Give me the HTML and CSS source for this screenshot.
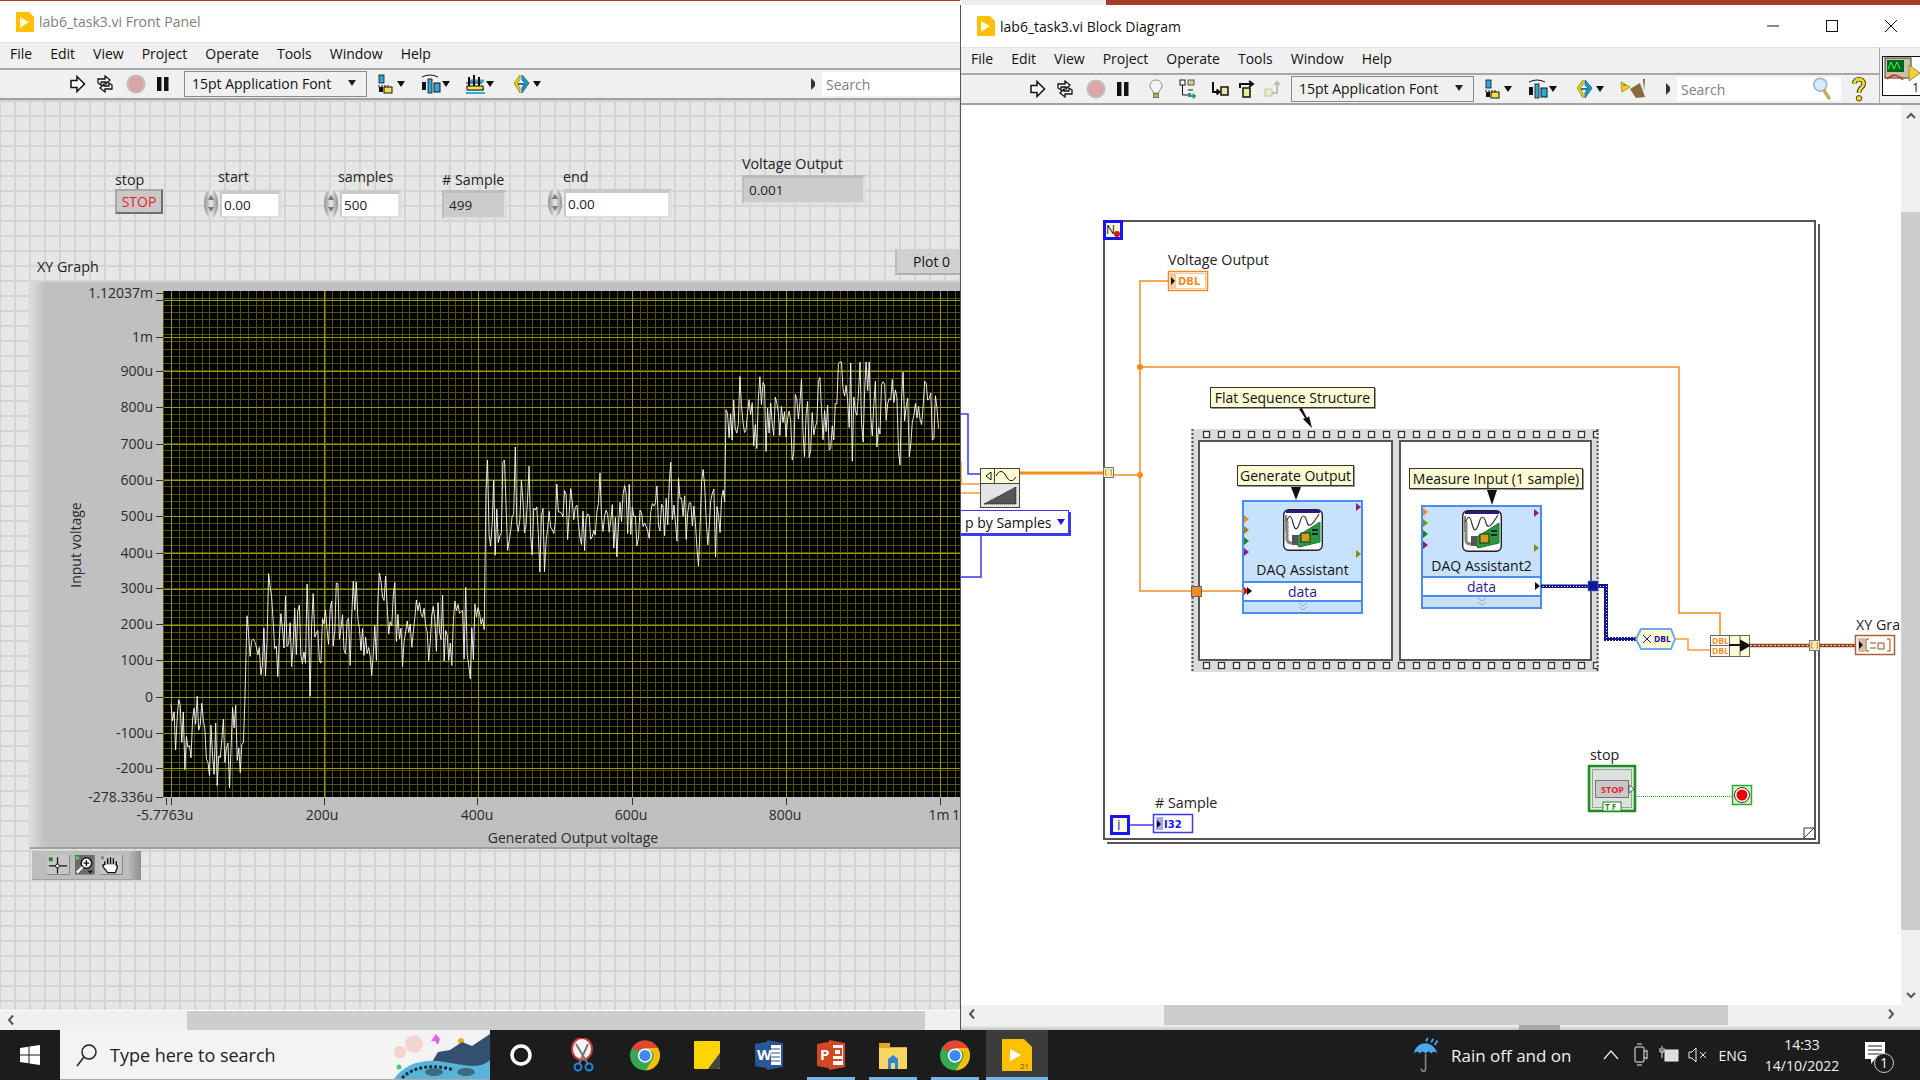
FILE: index.html
```html
<!DOCTYPE html>
<html lang="en">
<head>
  <meta charset="UTF-8">
  <title>lab6_task3.vi</title>
  <link rel="stylesheet" href="styles.css">
</head>
<body>

<svg class="defs" width="0" height="0">
  <defs>
    <symbol id="i-vi" viewBox="0 0 20 20"><path d="M2 0H15L20 5V20H2Z" fill="#ffc000"/><path d="M6 5L15 10L6 16Z" fill="#fff8d8"/></symbol>
    <symbol id="i-run" viewBox="0 0 20 20"><path d="M4 6.5H10V2.5L17.5 10L10 17.5V13.500H4Z" fill="#fff" stroke="#111" stroke-width="1.500"/></symbol>
    <symbol id="i-runc" viewBox="0 0 20 20"><path d="M3 9V5H10V2L15 6L11 10V8H6V11ZM17 11V15H10V18L5 14L9 10V12H14V9Z" fill="#fff" stroke="#111" stroke-width="1.300"/></symbol>
    <symbol id="i-abort" viewBox="0 0 20 20"><circle cx="10" cy="10" r="8.500" fill="#dda6a6" stroke="#bdbdbd" stroke-width="2"/></symbol>
    <symbol id="i-pause" viewBox="0 0 20 20"><rect x="4" y="3" width="4.500" height="14" fill="#111"/><rect x="11" y="3" width="4.500" height="14" fill="#111"/></symbol>
    <symbol id="i-bulb" viewBox="0 0 20 20"><path d="M10 1C6 1 4 4 4 7C4 10 7 11 7.500 14H12.500C13 11 16 10 16 7C16 4 14 1 10 1Z" fill="#f4f4f4" stroke="#8a8a8a"/><rect x="7.500" y="14.500" width="5" height="4" fill="#c8a848" stroke="#777"/></symbol>
    <symbol id="i-probe" viewBox="0 0 20 20"><rect x="3" y="1" width="5" height="5" fill="#fff" stroke="#111"/><rect x="11" y="1" width="6" height="5" fill="#cfcf9f" stroke="#555"/><path d="M5.500 6V16H14M11 11H16" fill="none" stroke="#111"/><path d="M14 17H19M16.500 14.500V19.500" stroke="#22aa22" stroke-width="2"/><rect x="11" y="14" width="3" height="4" fill="#3388cc"/></symbol>
    <symbol id="i-into" viewBox="0 0 20 20"><path d="M3 3V13H9M6.500 10.500L9.500 13L6.500 15.500" fill="none" stroke="#111" stroke-width="2"/><rect x="11" y="8" width="7" height="8" fill="#f0e8a0" stroke="#111" stroke-width="1.500"/></symbol>
    <symbol id="i-over" viewBox="0 0 20 20"><path d="M2 9V5H14M11 2L15 5L11 8" fill="none" stroke="#111" stroke-width="2"/><rect x="5" y="9" width="7" height="9" fill="#f0e8a0" stroke="#111" stroke-width="1.500"/></symbol>
    <symbol id="i-out" viewBox="0 0 20 20"><rect x="2" y="10" width="7" height="7" fill="#f0ecc8" stroke="#c4c0a0"/><path d="M9 14H14V4M11 6L14 3L17 6" fill="none" stroke="#bdbdbd" stroke-width="2"/></symbol>
    <symbol id="i-align" viewBox="0 0 30 20"><rect x="2" y="1" width="5" height="8" fill="#2fa9d8" stroke="#111" stroke-width=".8"/><path d="M1 12H12" stroke="#111" stroke-dasharray="2 1"/><rect x="2" y="13" width="4" height="5" fill="#111"/><rect x="7" y="13" width="8" height="6" fill="#f2e04a" stroke="#111"/><path d="M20 7H28L24 13Z" fill="#111"/></symbol>
    <symbol id="i-dist" viewBox="0 0 30 20"><path d="M1 3Q9 -1 17 3" fill="none" stroke="#111"/><rect x="1" y="8" width="4" height="8" fill="#111"/><rect x="7" y="5" width="4" height="14" fill="#2fa9d8" stroke="#111" stroke-width=".8"/><rect x="13" y="9" width="6" height="9" fill="#2fa9d8" stroke="#111"/><path d="M21 7H29L25 13Z" fill="#111"/></symbol>
    <symbol id="i-size" viewBox="0 0 30 20"><path d="M3 7H19M3 15H19" stroke="#2fa9d8" stroke-width="3"/><path d="M4 3V12M9 1V12M14 3V12" stroke="#111" stroke-width="2"/><path d="M1 9H17" stroke="#111"/><rect x="2" y="12" width="16" height="4" fill="#f2e04a" stroke="#111"/><path d="M1 19H20" stroke="#2fa9d8" stroke-width="2"/><path d="M21 7H29L25 13Z" fill="#111"/></symbol>
    <symbol id="i-order" viewBox="0 0 30 20"><path d="M8 1L2 9L8 19V14L5 9L8 6Z" fill="#e6d21e" stroke="#a89c10"/><path d="M10 1L17 9L10 19V14L13 9L10 6Z" fill="#1f98c8" stroke="#176f90"/><path d="M6 10H13" stroke="#2277aa" stroke-width="2"/><path d="M21 7H29L25 13Z" fill="#111"/></symbol>
    <symbol id="i-clean" viewBox="0 0 30 20"><path d="M1 3L10 8L2 13Z" fill="#f2d21e" stroke="#a89c10"/><path d="M3 6H6" stroke="#cc2222"/><path d="M23 0L25 0L24 12Z" fill="#7a5a2a"/><path d="M10 10L20 4L25 18L16 19Z" fill="#8a6a3a"/></symbol>
    <symbol id="i-lens" viewBox="0 0 22 28"><circle cx="9" cy="9" r="7.500" fill="#d8ecfa" stroke="#9cb7cf" stroke-width="2"/><path d="M13 15L20 26" stroke="#c9a46a" stroke-width="4"/></symbol>
    <symbol id="i-help" viewBox="0 0 18 28"><path d="M4 8C4 2 14 2 14 8C14 13 9 12 9 18" fill="none" stroke="#333" stroke-width="5"/><path d="M4 8C4 2 14 2 14 8C14 13 9 12 9 18" fill="none" stroke="#f4de18" stroke-width="3"/><circle cx="9" cy="24" r="3" fill="#f4de18" stroke="#333"/></symbol>
    <symbol id="i-daq" viewBox="0 0 40 42"><rect x=".7" y=".7" width="38.600" height="40.600" rx="5" fill="#fff" stroke="#222" stroke-width="1.400"/><path d="M3 1H37V4H3Z" fill="#2b1a7a"/><path d="M3 6V22M3 14C6 5 8 5 10 14C12 22 14 22 17 13C19 5 22 5 24 13C26 20 30 15 36 5" fill="none" stroke="#333" stroke-width="1.200"/><path d="M4 12V30Q4 34 9 34" fill="none" stroke="#888" stroke-width="3"/><path d="M10 30L37 13V33L16 38Z" fill="#2d9a3a" stroke="#174"/><rect x="18" y="24" width="9" height="9" fill="#c8a020" stroke="#222"/><rect x="9" y="26" width="6" height="10" fill="#555"/><path d="M29 21H35M29 25H35" stroke="#123" stroke-width="2"/></symbol>
    <symbol id="i-more" viewBox="0 0 12 10"><path d="M2 1L6 4L10 1M2 5L6 8L10 5" fill="none" stroke="#9aa8c0"/></symbol>
    <symbol id="i-left" viewBox="0 0 10 12"><path d="M7 1.500L3 6L7 10.500" fill="none" stroke="#555" stroke-width="2"/></symbol>
    <symbol id="i-right" viewBox="0 0 10 12"><path d="M3 1.500L7 6L3 10.500" fill="none" stroke="#555" stroke-width="2"/></symbol>
    <symbol id="i-chrome" viewBox="0 0 40 40"><circle cx="20" cy="20" r="20" fill="#34a853"/><path d="M20 0A20 20 0 0 1 37.300 10H20A10 10 0 0 0 11 15L3 10A20 20 0 0 1 20 0Z" fill="#ea4335"/><path d="M37.300 10A20 20 0 0 1 21 40L30 25A10 10 0 0 0 30 15L20 10Z" fill="#fbbc05"/><path d="M3 10L11 25" stroke="#34a853"/><circle cx="20" cy="20" r="9.500" fill="#fff"/><circle cx="20" cy="20" r="7.500" fill="#4285f4"/></symbol>
    <pattern id="film" patternUnits="userSpaceOnUse" x="1202" y="429" width="15" height="11"><rect x="1.500" y="2.500" width="6" height="6" fill="#fff" stroke="#333" stroke-width="1.300"/></pattern>
    <pattern id="blue-wire" patternUnits="userSpaceOnUse" width="3" height="3"><rect width="3" height="3" fill="#14148c"/><rect x="1" y="1" width="1" height="1" fill="#fff"/></pattern>
  </defs>
</svg>

<div class="strip-left"></div>

<!-- front panel -->
<section class="win front">
  <header class="titlebar">
    <svg class="vi-icon"><use href="#i-vi"/></svg>
    <span class="title-front">lab6_task3.vi Front Panel</span>
  </header>
  <nav class="menubar">
    <span>File</span><span>Edit</span><span>View</span><span>Project</span><span>Operate</span><span>Tools</span><span>Window</span><span>Help</span>
  </nav>
  <div class="toolbar">
    <svg class="ico ml-67"><use href="#i-run"/></svg>
    <svg class="ico ml-8"><use href="#i-runc"/></svg>
    <svg class="ico ml-11"><use href="#i-abort"/></svg>
    <svg class="ico ml-7"><use href="#i-pause"/></svg>
    <div class="font-ring ml-11"><span>15pt Application Font</span><i></i></div>
    <svg class="ico-w ml-10"><use href="#i-align"/></svg>
    <svg class="ico-w ml-14"><use href="#i-dist"/></svg>
    <svg class="ico-w ml-14"><use href="#i-size"/></svg>
    <svg class="ico-w ml-17"><use href="#i-order"/></svg>
    <i class="search-arrow ml-269"></i>
    <div class="searchbox searchbox-front">Search</div>
  </div>
  <div class="panel">
    <span class="lbl l-stop">stop</span>
    <div class="stop-btn">STOP</div>

    <span class="lbl l-start">start</span>
    <div class="spin s-start"></div>
    <div class="num n-start">0.00</div>

    <span class="lbl l-samples">samples</span>
    <div class="spin s-samples"></div>
    <div class="num n-samples">500</div>

    <span class="lbl l-nsample"># Sample</span>
    <div class="ind i-nsample">499</div>

    <span class="lbl l-end">end</span>
    <div class="spin s-end"></div>
    <div class="num n-end">0.00</div>

    <span class="lbl l-volt">Voltage Output</span>
    <div class="ind i-volt">0.001</div>

    <span class="lbl l-xy">XY Graph</span>
    <div class="legend">Plot 0</div>

    <div class="graph-frame">
      <svg class="graph" viewBox="30 281 931 568" width="931" height="568">
        <rect x="164" y="291" width="797" height="506" fill="#000"/>
        <g id="grid" shape-rendering="crispEdges"></g>
        <polyline id="trace" fill="none" stroke="#fff" stroke-width=".9"/>
        <path d="M156 293H163M156 300H163M156 337H163M156 371.500H163M156 407.500H163M156 444H163M156 480H163M156 516.500H163M156 553H163M156 588.500H163M156 624.500H163M156 660.500H163M156 697H163M156 733H163M156 768H163M156 797H163M166 798V805M171 798V805M324 798V805M477 798V805M632 798V805M786 798V805M940 798V805" stroke="#333" shape-rendering="crispEdges"/>
        <g class="y-labels">
          <text x="153" y="298">1.12037m</text>
          <text x="153" y="342">1m</text>
          <text x="153" y="376">900u</text>
          <text x="153" y="412">800u</text>
          <text x="153" y="449">700u</text>
          <text x="153" y="485">600u</text>
          <text x="153" y="521">500u</text>
          <text x="153" y="558">400u</text>
          <text x="153" y="593">300u</text>
          <text x="153" y="629">200u</text>
          <text x="153" y="665">100u</text>
          <text x="153" y="702">0</text>
          <text x="153" y="738">-100u</text>
          <text x="153" y="773">-200u</text>
          <text x="153" y="802">-278.336u</text>
        </g>
        <g class="x-labels">
          <text x="165" y="820">-5.7763u</text>
          <text x="322" y="820">200u</text>
          <text x="477" y="820">400u</text>
          <text x="631" y="820">600u</text>
          <text x="785" y="820">800u</text>
          <text x="939" y="820">1m</text>
          <text x="956" y="820">1</text>
          <text x="573" y="843">Generated Output voltage</text>
        </g>
        <text class="y-title" transform="translate(81 545) rotate(-90)">Input voltage</text>
      </svg>
    </div>

    <div class="palette">
      <div class="pal-btn">
        <svg width="23" height="20" viewBox="0 0 23 20"><path d="M2 11H21M11 2V19" stroke="#111" stroke-width="1.300"/><circle cx="11" cy="11" r="2" fill="#fff" stroke="#111"/><rect x="2" y="2" width="4" height="4" fill="#2f7a2f"/></svg>
      </div>
      <div class="pal-btn pal-on">
        <svg width="20" height="20" viewBox="0 0 20 20"><circle cx="12" cy="8" r="5.500" fill="#fff" stroke="#111" stroke-width="1.500"/><path d="M9 8H15M12 5V11" stroke="#111" stroke-width="1.500"/><path d="M8 12L2 18" stroke="#fff" stroke-width="2.500"/><path d="M13 16H19L16 19Z" fill="#111"/><rect x="1" y="1" width="3" height="3" fill="#44ee44"/></svg>
      </div>
      <div class="pal-btn">
        <svg width="23" height="20" viewBox="0 0 23 20"><path d="M5 10V6M8 9V3M11 9V2M14 9V3M17 11V6M5 10C3 9 2 11 4 13L8 18H16L18 13V10" fill="#fff" stroke="#111" stroke-width="1.400"/><rect x="1" y="1" width="3" height="3" fill="#6a8a6a"/></svg>
      </div>
    </div>
  </div>
  <div class="hscroll">
    <svg class="arrow-l"><use href="#i-left"/></svg>
    <div class="thumb thumb-front"></div>
  </div>
</section>

<!-- block diagram -->
<section class="win block">
  <header class="titlebar titlebar-block">
    <svg class="vi-icon"><use href="#i-vi"/></svg>
    <span class="title-block">lab6_task3.vi Block Diagram</span>
    <div class="win-btns">
      <svg width="14" height="14" viewBox="0 0 14 14"><path d="M1 7H13" stroke="#111"/></svg>
      <svg width="14" height="14" viewBox="0 0 14 14"><rect x="1.500" y="1.500" width="11" height="11" fill="none" stroke="#111"/></svg>
      <svg width="14" height="14" viewBox="0 0 14 14"><path d="M1 1L13 13M13 1L1 13" stroke="#111"/></svg>
    </div>
  </header>
  <div class="bars">
    <div class="bars-main">
      <nav class="menubar">
        <span>File</span><span>Edit</span><span>View</span><span>Project</span><span>Operate</span><span>Tools</span><span>Window</span><span>Help</span>
      </nav>
      <div class="toolbar">
        <svg class="ico ml-66"><use href="#i-run"/></svg>
        <svg class="ico ml-8"><use href="#i-runc"/></svg>
        <svg class="ico ml-11"><use href="#i-abort"/></svg>
        <svg class="ico ml-7"><use href="#i-pause"/></svg>
        <svg class="ico ml-13"><use href="#i-bulb"/></svg>
        <svg class="ico ml-11"><use href="#i-probe"/></svg>
        <svg class="ico ml-13"><use href="#i-into"/></svg>
        <svg class="ico ml-8"><use href="#i-over"/></svg>
        <svg class="ico ml-5"><use href="#i-out"/></svg>
        <div class="font-ring ml-8"><span>15pt Application Font</span><i></i></div>
        <svg class="ico-w ml-10"><use href="#i-align"/></svg>
        <svg class="ico-w ml-14"><use href="#i-dist"/></svg>
        <svg class="ico-w ml-17"><use href="#i-order"/></svg>
        <svg class="ico-w ml-15"><use href="#i-clean"/></svg>
        <i class="search-arrow ml-16"></i>
        <div class="searchbox searchbox-block">Search<svg class="lens"><use href="#i-lens"/></svg></div>
        <svg class="help"><use href="#i-help"/></svg>
      </div>
    </div>
    <div class="vi-pane">
      <div class="vi-thumb">
        <svg width="38" height="26" viewBox="0 0 38 26"><rect x="2" y="1" width="26" height="20" fill="#c8c4a0" stroke="#333"/><rect x="4" y="3" width="17" height="12" fill="#062"/><path d="M5 12L8 5L11 12L14 5L17 12" fill="none" stroke="#3f3"/><path d="M4 22Q12 14 20 23" fill="none" stroke="#d22" stroke-width="1.500"/><path d="M26 8L37 16L26 24Z" fill="#f2d21e" stroke="#888"/></svg>
        <b>1</b>
      </div>
    </div>
  </div>

  <div class="bd-body">
    <div class="canvas">
      <div class="loop"></div>
      <div class="loop-n"><b>N</b><i></i></div>

      <span class="lbl d-volt">Voltage Output</span>
      <span class="lbl d-xy">XY Gra</span>
      <span class="lbl d-stop">stop</span>
      <span class="lbl d-sample"># Sample</span>

      <div class="ramp-ring">p by Samples<i></i></div>

      <div class="seq">
        <div class="frame frame-1"></div>
        <div class="frame frame-2"></div>
      </div>

      <div class="note note-flat">Flat Sequence Structure</div>
      <div class="note note-gen">Generate Output</div>
      <div class="note note-meas">Measure Input (1 sample)</div>

      <div class="daq daq-1">
        <div class="daq-top"><svg class="daq-ic"><use href="#i-daq"/></svg><span>DAQ Assistant</span></div>
        <div class="daq-row">data</div>
        <div class="daq-more"><svg><use href="#i-more"/></svg></div>
      </div>
      <div class="daq daq-2">
        <div class="daq-top"><svg class="daq-ic"><use href="#i-daq"/></svg><span>DAQ Assistant2</span></div>
        <div class="daq-row">data</div>
        <div class="daq-more"><svg><use href="#i-more"/></svg></div>
      </div>

      <svg class="wires" viewBox="961 105 940 900" width="940" height="900">
        <!-- film strip holes -->
        <rect x="1202" y="429" width="396" height="11" fill="url(#film)"/>
        <rect x="1202" y="661" width="396" height="11" fill="url(#film)"/>
        <path d="M1192.500 429V672M1597.500 429V672" stroke="#555" stroke-width="2" stroke-dasharray="2 2"/>

        <!-- blue ramp inputs -->
        <path d="M961 414H968V474H980M961 577H981V535" fill="none" stroke="#3a3af0" stroke-width="1.500"/>
        <path d="M961 461V484H980M961 493H980" fill="none" stroke="#ff9a3c" stroke-width="1.500"/>

        <!-- orange wires -->
        <path d="M1020 473H1103" stroke="#f58a1f" stroke-width="3"/>
        <path d="M1113 475H1140M1168 281H1140V591H1191M1140 367H1679V613H1720V635M1202 591H1245" fill="none" stroke="#f58a1f" stroke-width="1.500"/>
        <circle cx="1140" cy="475" r="3" fill="#f58a1f"/>
        <circle cx="1140" cy="367" r="3" fill="#f58a1f"/>
        <path d="M1676 639H1688V650H1710" fill="none" stroke="#ff9a3c" stroke-width="1.500"/>

        <!-- ramp node -->
        <rect x="980.500" y="468.500" width="39" height="39" fill="#e4e4e4" stroke="#444"/>
        <rect x="981" y="469" width="38" height="14" fill="#fdfbd4"/>
        <path d="M980.500 483.500H1019.500M994.500 469V483" stroke="#444"/>
        <path d="M986 476L991 472V480ZM996 476C999 470 1003 470 1006 476C1009 482 1013 482 1016 477" fill="none" stroke="#111"/>
        <path d="M984 504L1016 487V504Z" fill="#555"/>
        <path d="M984 504L1016 487V504Z" fill="none" stroke="#111" stroke-dasharray="1 1"/>

        <!-- arrows from notes -->
        <path d="M1299 409L1305 418L1303 419L1312 428L1309 416L1307 418L1302 408Z" fill="#111"/>
        <path d="M1291 487H1301L1296 500Z" fill="#111"/>
        <path d="M1487 490H1497L1492 505Z" fill="#111"/>

        <!-- tunnels -->
        <rect x="1103.500" y="467.500" width="10" height="10" fill="#efe9c0" stroke="#777"/>
        <path d="M1107 470H1105.500V475H1107M1110 470H1111.500V475H1110" fill="none" stroke="#f58a1f"/>
        <rect x="1191.500" y="586.500" width="10" height="10" fill="#f58a1f" stroke="#666"/>

        <!-- DAQ terminals -->
        <g>
          <path d="M1244 515L1249 519L1244 523Z" fill="#f58a1f"/>
          <path d="M1244 526L1249 530L1244 534Z" fill="#8a8a1a"/>
          <path d="M1244 537L1249 541L1244 545Z" fill="#1a8a1a"/>
          <path d="M1244 548L1249 552L1244 556Z" fill="#8a1a8a"/>
          <path d="M1356 503L1361 507L1356 511Z" fill="#8a1a8a"/>
          <path d="M1356 550L1361 554L1356 558Z" fill="#8a8a1a"/>
          <path d="M1244 587L1249 591L1244 595Z" fill="#e00"/>
          <path d="M1247 587L1252 591L1247 595Z" fill="#111"/>
          <path d="M1423 508L1428 512L1423 516Z" fill="#f58a1f"/>
          <path d="M1423 519L1428 523L1423 527Z" fill="#8a8a1a"/>
          <path d="M1423 530L1428 534L1423 538Z" fill="#1a8a1a"/>
          <path d="M1423 541L1428 545L1423 549Z" fill="#8a1a8a"/>
          <path d="M1534 509L1539 513L1534 517Z" fill="#8a1a8a"/>
          <path d="M1534 544L1539 548L1534 552Z" fill="#8a8a1a"/>
          <path d="M1535 582L1540 586L1535 590Z" fill="#111"/>
        </g>

        <!-- blue data wire -->
        <path d="M1541 584.500H1588V588H1541ZM1598 584H1608V637H1637V641H1604V588H1598Z" fill="url(#blue-wire)"/>
        <rect x="1588" y="581" width="10" height="10" fill="#14148c" stroke="#4488ff" stroke-width=".6"/>

        <!-- convert from dynamic data -->
        <path d="M1636 639L1641 629H1671L1675 639L1671 649H1641Z" fill="#fdfbd4" stroke="#6fa8f5" stroke-width="2"/>
        <path d="M1643 635L1651 643M1651 635L1643 643" stroke="#14148c"/>
        <text class="t-small t-navy" x="1654" y="642">DBL</text>

        <!-- bundle -->
        <rect x="1710.500" y="635.500" width="39" height="21" fill="#fdfbd4" stroke="#666"/>
        <path d="M1710.500 645.500H1729.500M1729.500 635V656M1740 635V656" stroke="#666"/>
        <rect x="1711" y="636" width="18" height="9" fill="#fff"/>
        <rect x="1711" y="646" width="18" height="10" fill="#fff"/>
        <text class="t-small t-orange" x="1712" y="644">DBL</text>
        <text class="t-small t-orange" x="1712" y="654">DBL</text>
        <path d="M1729 645H1746M1741 641L1749 645.500L1741 650Z" stroke="#111" stroke-width="2" fill="#111"/>

        <!-- cluster wire -->
        <path d="M1750 645.500H1855" stroke="#8f4a22" stroke-width="3.500"/>
        <path d="M1750 645.500H1855" stroke="#e9c7a8" stroke-dasharray="2 2"/>
        <rect x="1809.500" y="640.500" width="10" height="10" fill="#efe9c0" stroke="#777"/>
        <path d="M1813 643H1811.500V648H1813M1816 643H1817.500V648H1816" fill="none" stroke="#f58a1f"/>

        <!-- terminals -->
        <rect x="1168.500" y="271.500" width="39" height="19" fill="#fff" stroke="#f58a1f" stroke-width="1.500"/>
        <rect x="1170.500" y="273.500" width="35" height="15" fill="none" stroke="#f5c9a0"/>
        <rect x="1171" y="274" width="5" height="14" fill="#f5c9a0"/>
        <path d="M1171 277L1175 281L1171 285Z" fill="#111"/>
        <text class="t-term t-orange" x="1178" y="285">DBL</text>

        <rect x="1855.500" y="635.500" width="39" height="19" fill="#fff" stroke="#a8603c" stroke-width="1.500"/>
        <rect x="1858" y="638" width="7" height="14" fill="#dcb9a8"/>
        <path d="M1859 641L1863 645L1859 649Z" fill="#111"/>
        <path d="M1869 639H1866V651H1869M1887 639H1890V651H1887M1870 643H1876M1870 648H1876M1878 643H1884V649H1878Z" fill="none" stroke="#8f4a22"/>

        <rect x="1153.500" y="814.500" width="39" height="18" fill="#fff" stroke="#3a3af0" stroke-width="1.500"/>
        <rect x="1156" y="817" width="7" height="13" fill="#a8a8f0"/>
        <path d="M1157 820L1161 824L1157 828Z" fill="#111"/>
        <text class="t-term t-blue" x="1164" y="828">I32</text>
        <path d="M1130 825H1153" stroke="#3a3af0" stroke-width="1.500"/>
        <rect x="1111.500" y="816.500" width="17" height="17" fill="#fdfbd4" stroke="#1515f5" stroke-width="3"/>
        <text class="t-i" x="1117" y="830">i</text>

        <!-- stop button terminal -->
        <rect x="1589" y="766" width="46" height="45" fill="#e0e0e0" stroke="#1f8a1f" stroke-width="2.500"/>
        <rect x="1592.500" y="769.500" width="39" height="38" fill="#e0e0e0" stroke="#7ab87a"/>
        <rect x="1595.500" y="780.500" width="33" height="17" fill="#c8c8c8" stroke="#777"/>
        <text class="t-stop" x="1601" y="793">STOP</text>
        <path d="M1629 785L1634 789L1629 793Z" fill="#fff" stroke="#555"/>
        <rect x="1603" y="802" width="18" height="9" fill="#fff" stroke="#1f8a1f"/>
        <text class="t-tf" x="1605" y="810">T F</text>
        <path d="M1637 796.500H1732" stroke="#2faa2f" stroke-dasharray="1 1"/>
        <rect x="1732.500" y="785.500" width="19" height="19" fill="#dff0c8" stroke="#2faa2f" stroke-width="1.500"/>
        <circle cx="1742" cy="795" r="7.500" fill="#fff" stroke="#333"/>
        <circle cx="1742" cy="795" r="5.500" fill="#f00000"/>

        <!-- conditional dog ear -->
        <path d="M1804 828H1814L1804 838Z" fill="#fff" stroke="#333"/>
      </svg>
    </div>
    <div class="vscroll">
      <svg class="arrow-up" width="12" height="10" viewBox="0 0 12 10"><path d="M2 7L6 3L10 7" fill="none" stroke="#555" stroke-width="2"/></svg>
      <div class="thumb-v"></div>
      <svg class="arrow-down" width="12" height="10" viewBox="0 0 12 10"><path d="M2 3L6 7L10 3" fill="none" stroke="#555" stroke-width="2"/></svg>
    </div>
  </div>
  <div class="hscroll hscroll-block">
    <svg class="arrow-l"><use href="#i-left"/></svg>
    <div class="thumb thumb-block"></div>
    <svg class="arrow-r"><use href="#i-right"/></svg>
  </div>
  <div class="under"><div class="under-thumb"></div></div>
</section>

<!-- taskbar -->
<footer class="taskbar">
  <div class="start">
    <svg width="20" height="20" viewBox="0 0 20 20"><path d="M0 3L8.500 1.800V9.500H0ZM9.500 1.600L20 0V9.500H9.500ZM0 10.500H8.500V18.200L0 17ZM9.500 10.500H20V20L9.500 18.400Z" fill="#fff"/></svg>
  </div>
  <div class="task-search">
    <svg class="search-ic" width="24" height="26" viewBox="0 0 24 26"><circle cx="14" cy="10" r="7" fill="none" stroke="#222" stroke-width="1.500"/><path d="M9 15L2 24" stroke="#222" stroke-width="1.500"/></svg>
    <span>Type here to search</span>
    <svg class="search-art" width="96" height="49" viewBox="0 0 96 49"><circle cx="20" cy="14" r="9" fill="#f2d4d0"/><circle cx="6" cy="22" r="6" fill="#f2d4d0"/><path d="M42 4L46 9L44 15L41 11L37 11Z" fill="#e860e8"/><circle cx="67" cy="11" r="3" fill="#f0a820"/><circle cx="5" cy="37" r="2.500" fill="#3fd070"/><path d="M32 42L44 22L56 20L68 12L78 16L96 4V49H32Z" fill="#34506e"/><path d="M0 49C10 34 30 28 50 32C70 35 85 40 96 30V49Z" fill="#58b4d8"/><path d="M8 48C20 36 40 34 60 40" fill="none" stroke="#1c2c3c" stroke-width="3" stroke-dasharray="3 2"/><ellipse cx="40" cy="42" rx="9" ry="4" fill="#3b6b80"/><ellipse cx="72" cy="42" rx="9" ry="4" fill="#3b6b80"/></svg>
  </div>
  <div class="apps">
    <div class="app"><svg width="24" height="24" viewBox="0 0 24 24"><circle cx="12" cy="12" r="9" fill="none" stroke="#fff" stroke-width="3.500"/></svg></div>
    <div class="app"><svg width="32" height="34" viewBox="0 0 32 34"><ellipse cx="15" cy="11" rx="10" ry="11" fill="#f4f4f4" stroke="#c83838" stroke-width="2"/><path d="M9 6L21 26M21 6L12 26" stroke="#777" stroke-width="2"/><circle cx="11" cy="29" r="3.500" fill="none" stroke="#1e88d8" stroke-width="2"/><circle cx="22" cy="29" r="3.500" fill="none" stroke="#1e88d8" stroke-width="2"/></svg></div>
    <div class="app"><svg width="30" height="31"><use href="#i-chrome"/></svg></div>
    <div class="app"><svg width="26" height="28" viewBox="0 0 26 28"><path d="M0 1Q0 0 1 0H25Q26 0 26 1V27Q26 28 25 28H1Q0 28 0 27Z" fill="#ffd400"/><path d="M14 28L26 12V26Q26 28 24 28Z" fill="#444"/></svg></div>
    <div class="app"><svg width="28" height="30" viewBox="0 0 28 30"><path d="M12 0L28 3V27L12 30Z" fill="#2b579a"/><rect x="14" y="5" width="12" height="20" fill="#fff"/><path d="M16 9H25M16 13H25M16 17H25M16 21H25" stroke="#2b579a"/><path d="M0 4L16 1V29L0 26Z" fill="#2b579a"/><text class="app-letter" x="2" y="20">W</text></svg></div>
    <div class="app app-open"><svg width="28" height="30" viewBox="0 0 28 30"><path d="M12 0L28 3V27L12 30Z" fill="#d24726"/><rect x="14" y="5" width="12" height="20" fill="#fff"/><path d="M17 9H24V15H17ZM16 20H25" fill="none" stroke="#d24726" stroke-width="2"/><path d="M0 4L16 1V29L0 26Z" fill="#d24726"/><text class="app-letter" x="3" y="20">P</text></svg></div>
    <div class="app app-open"><svg width="28" height="30" viewBox="0 0 28 30"><path d="M0 3H11V7H28V29H0Z" fill="#e2a52c"/><rect x="0" y="8" width="28" height="21" fill="#fbd561"/><path d="M9 29V19L14 15L19 19V29H16V23H12V29Z" fill="#2b88d8"/></svg></div>
    <div class="app app-open"><svg width="30" height="31"><use href="#i-chrome"/></svg></div>
    <div class="app app-open app-on"><svg width="30" height="32" viewBox="0 0 30 32"><path d="M0 0H22L30 8V32H0Z" fill="#ffc000"/><path d="M8 10L19 16L8 22Z" fill="#fff"/><text class="app-small" x="18" y="30">21</text></svg></div>
  </div>
  <div class="tray">
    <svg class="weather" width="28" height="37" viewBox="0 0 30 42"><path d="M1 19C3 10 9 7 14 7C20 7 26 11 28 19C25 16 23 16 21 19C19 16 17 16 14.500 19C12 16 10 16 8 19C6 16 4 16 1 19Z" fill="#4aa8f0"/><path d="M14.500 19V36C14.500 40 10 40 9.500 36" fill="none" stroke="#888" stroke-width="1.800"/><path d="M17 1L15 5M23 2L21 6M28 4L25 9" stroke="#4aa8f0" stroke-width="2"/></svg>
    <span class="rain">Rain off and on</span>
    <svg class="chev" width="16" height="10" viewBox="0 0 16 10"><path d="M1 9L8 1L15 9" fill="none" stroke="#eee" stroke-width="1.200"/></svg>
    <svg class="tray-ic phone" width="14" height="28" viewBox="0 0 14 28"><rect x="1" y="6" width="9" height="15" rx="1" fill="none" stroke="#eee"/><path d="M10 11L13 9V18L10 16M3 3H8M3 24H8" fill="none" stroke="#eee"/></svg>
    <svg class="tray-ic batt" width="20" height="18" viewBox="0 0 20 18"><rect x="6" y="4" width="13" height="11" fill="#ddd" stroke="#eee"/><path d="M3 0V5M1 2V6H5V2M3 6V12" fill="none" stroke="#eee"/></svg>
    <svg class="tray-ic speaker" width="20" height="18" viewBox="0 0 20 18"><path d="M1 6H4L8 2V16L4 12H1Z" fill="none" stroke="#eee"/><path d="M12 6L18 12M18 6L12 12" stroke="#eee"/></svg>
    <span class="eng">ENG</span>
    <div class="clock"><span>14:33</span><span>14/10/2022</span></div>
    <div class="notify">
      <svg width="20" height="28" viewBox="0 0 20 28"><path d="M0 1H20V18H10L6 23V18H0Z" fill="#fff"/><path d="M3 5H17M3 9H17M3 13H17" stroke="#222" stroke-width="1.200"/></svg>
      <b>1</b>
    </div>
  </div>
</footer>

<script src="graph.js"></script>
</body>
</html>
```

FILE: styles.css
```css
* { box-sizing: border-box; }

html, body {
  margin: 0;
  height: 1080px;
  overflow: hidden;
}

body {
  position: relative;
  width: 1920px;
  background-color: #a63c26;
  font-family: "Open Sans", "Noto Sans", sans-serif;
  font-size: 14px;
  color: #111;
}

.defs { position: absolute; }

.strip-left {
  position: absolute;
  left: 960px;
  top: 0;
  width: 146px;
  height: 5px;
  background-color: #eeeeee;
}

/* windows */
.win {
  position: absolute;
  display: flex;
  flex-direction: column;
  background-color: #f0f0f0;
  overflow: hidden;
}

.front {
  left: 0;
  top: 1px;
  width: 961px;
  height: 1029px;
}

.block {
  left: 961px;
  top: 5px;
  width: 959px;
  height: 1025px;
  box-shadow: -1px 0 0 #555;
  overflow: visible;
}

.titlebar {
  display: flex;
  align-items: center;
  flex: none;
  height: 41px;
  padding-left: 14px;
  background-color: #fff;
}

.titlebar-block { height: 42px; }

.vi-icon {
  width: 20px;
  height: 20px;
  margin-right: 5px;
}

.title-front {
  font-size: 14px;
  color: #808080;
}

.title-block {
  font-size: 14px;
  color: #111;
}

.win-btns {
  display: flex;
  gap: 45px;
  margin-left: auto;
  margin-right: 22px;
}

.menubar {
  display: flex;
  align-items: center;
  flex: none;
  gap: 18px;
  height: 26px;
  padding-left: 10px;
  padding-bottom: 4px;
  background-color: #f0f0f0;
  border-top: 1px solid #e2e2e2;
  font-size: 14px;
}

.toolbar {
  display: flex;
  align-items: center;
  flex: none;
  height: 32px;
  background-color: #f0f0f0;
  border-top: 2px solid #a8a8a8;
  border-bottom: 2px solid #a0a0a0;
}

.ico { flex: none; width: 20px; height: 20px; }
.ico-w { flex: none; width: 30px; height: 20px; }

.ml-5 { margin-left: 5px; }
.ml-7 { margin-left: 7px; }
.ml-8 { margin-left: 8px; }
.ml-10 { margin-left: 10px; }
.ml-11 { margin-left: 11px; }
.ml-13 { margin-left: 13px; }
.ml-14 { margin-left: 14px; }
.ml-15 { margin-left: 15px; }
.ml-16 { margin-left: 16px; }
.ml-17 { margin-left: 17px; }
.ml-66 { margin-left: 66px; }
.ml-67 { margin-left: 67px; }
.ml-269 { margin-left: 269px; }

.font-ring {
  display: flex;
  align-items: center;
  flex: none;
  width: 183px;
  height: 26px;
  padding-left: 7px;
  padding-bottom: 2px;
  border: 1px solid #8a8a8a;
  background-color: #f0f0f0;
  font-size: 14px;
}

.font-ring i {
  margin-left: auto;
  margin-right: 10px;
  border-left: 4px solid transparent;
  border-right: 4px solid transparent;
  border-top: 6px solid #222;
}

.search-arrow {
  flex: none;
  width: 6px;
  height: 12px;
  margin-right: 5px;
  border-left: 4px solid #333;
  border-top: 4px solid transparent;
  border-bottom: 4px solid transparent;
  box-shadow: 5px 0 0 -4px #999;
}

.searchbox {
  position: relative;
  display: flex;
  align-items: center;
  height: 24px;
  padding-left: 4px;
  background-color: #fff;
  color: #808080;
  font-size: 14px;
}

.searchbox-front { flex: 1; }
.searchbox-block { flex: none; width: 164px; }

.lens {
  position: absolute;
  right: 8px;
  top: 0;
  width: 22px;
  height: 24px;
}

.help {
  flex: none;
  width: 18px;
  height: 26px;
  margin-left: 9px;
}

/* front panel */
.panel {
  position: relative;
  flex: 1;
  overflow: hidden;
  background-color: #e6e6e6;
  background-image:
    linear-gradient(#d4d4d4 2px, transparent 2px),
    linear-gradient(90deg, #d4d4d4 2px, transparent 2px);
  background-size: 15px 15px;
  background-position: -1px 0;
}

.lbl {
  position: absolute;
  font-size: 14.300px;
  line-height: 20px;
  color: #222;
  white-space: nowrap;
}

.l-stop { left: 115px; top: 70px; }
.l-start { left: 218px; top: 67px; }
.l-samples { left: 338px; top: 67px; }
.l-nsample { left: 442px; top: 70px; }
.l-end { left: 563px; top: 67px; }
.l-volt { left: 742px; top: 54px; }
.l-xy { left: 37px; top: 157px; }

.stop-btn {
  position: absolute;
  left: 115px;
  top: 89px;
  width: 48px;
  height: 25px;
  background-color: #c8c8c8;
  border: 2px solid #6e6e6e;
  border-top-color: #a8a8a8;
  border-left-color: #a8a8a8;
  color: #f01c2c;
  font-size: 14px;
  line-height: 21px;
  text-align: center;
}

.spin {
  position: absolute;
  width: 14px;
  height: 29px;
  border-radius: 50%;
  background: linear-gradient(90deg, #8f8f8f, #e8e8e8 50%, #909090);
}

.spin::before, .spin::after {
  content: "";
  position: absolute;
  left: 4px;
  border-left: 3px solid transparent;
  border-right: 3px solid transparent;
}

.spin::before { top: 6px; border-bottom: 5px solid #777; }
.spin::after { bottom: 6px; border-top: 5px solid #777; }

.s-start { left: 204px; top: 89px; }
.s-samples { left: 324px; top: 89px; }
.s-end { left: 548px; top: 88px; }

.num {
  position: absolute;
  height: 28px;
  padding-left: 2px;
  background-color: #fff;
  border-style: solid;
  border-width: 4px 4px 2px 2px;
  border-color: #c9c9c9 #dedede #dedede #c9c9c9;
  font-size: 13.500px;
  line-height: 22px;
  color: #222;
}

.n-start { left: 220px; top: 90px; width: 62px; }
.n-samples { left: 340px; top: 90px; width: 62px; }
.n-end { left: 564px; top: 89px; width: 108px; height: 29px; }

.ind {
  position: absolute;
  padding-left: 5px;
  background-color: #cbcbcb;
  border-style: solid;
  border-width: 3px 3px 2px 2px;
  border-color: #bdbdbd #dedede #dedede #bdbdbd;
  font-size: 13.500px;
  line-height: 24px;
  color: #222;
}

.i-nsample { left: 442px; top: 90px; width: 65px; height: 29px; }
.i-volt { left: 742px; top: 75px; width: 124px; height: 29px; }

.legend {
  position: absolute;
  left: 895px;
  top: 149px;
  width: 70px;
  height: 26px;
  padding-left: 16px;
  background-color: #d0d0d0;
  border-bottom: 2px solid #b0b0b0;
  border-left: 2px solid #bcbcbc;
  font-size: 14px;
  line-height: 26px;
}

.graph-frame {
  position: absolute;
  left: 30px;
  top: 181px;
  width: 931px;
  height: 568px;
  background: linear-gradient(90deg, #dcdcdc, #c0c0c0 15px);
  border-top: 1px solid #d8d8d8;
  border-bottom: 2px solid #a0a0a0;
}

.graph { display: block; margin-top: -1px; }

.graph text {
  font-size: 14px;
  fill: #2a2a2a;
}

.y-labels text { text-anchor: end; }
.x-labels text { text-anchor: middle; }
.y-title { text-anchor: middle; }

.palette {
  position: absolute;
  left: 32px;
  top: 751px;
  display: flex;
  align-items: center;
  gap: 5px;
  width: 109px;
  height: 29px;
  padding-left: 15px;
  background: linear-gradient(90deg, #bdbdbd 88%, #8e8e8e);
  border-bottom: 1px solid #a0a0a0;
}

.pal-btn {
  display: flex;
  align-items: center;
  justify-content: center;
  flex: none;
  width: 23px;
  height: 20px;
  background-color: #c6c6c6;
  border-right: 1px solid #888;
  border-bottom: 1px solid #888;
}

.pal-on {
  width: 20px;
  background-color: #6a6a6a;
}

/* scroll bars */
.hscroll {
  position: relative;
  flex: none;
  height: 20px;
  background-color: #f0f0f0;
  border-top: 1px solid #fff;
}

.arrow-l, .arrow-r {
  position: absolute;
  left: 6px;
  top: 3px;
  width: 10px;
  height: 12px;
}

.arrow-r { left: auto; right: 24px; }

.thumb {
  position: absolute;
  top: 0;
  bottom: 0;
  background-color: #cdcdcd;
}

.thumb-front { left: 187px; width: 738px; }
.thumb-block { left: 203px; width: 564px; }

.hscroll-block { border-top: 0; }

.under {
  position: relative;
  flex: none;
  height: 5px;
  background: linear-gradient(#f4f4f4, #c4c4c4);
}

.under-thumb {
  position: absolute;
  left: 558px;
  top: 0;
  width: 41px;
  height: 5px;
  background-color: #a8a8a8;
}

/* block diagram bars */
.bars {
  display: flex;
  flex: none;
  height: 58px;
}

.bars-main {
  display: flex;
  flex-direction: column;
  flex: none;
  width: 918px;
}

.vi-pane {
  flex: 1;
  padding: 8px 0 0 2px;
  background-color: #f0f0f0;
  border-left: 1px solid #a8a8a8;
  border-top: 1px solid #e2e2e2;
  border-bottom: 2px solid #a0a0a0;
}

.vi-thumb {
  position: relative;
  height: 40px;
  background-color: #fff;
  border: 1px solid #111;
  border-right: 0;
}

.vi-thumb b {
  position: absolute;
  right: 2px;
  bottom: 0;
  font-size: 12px;
  font-weight: 400;
  line-height: 14px;
}

.bd-body {
  display: flex;
  flex: 1;
  min-height: 0;
}

.canvas {
  position: relative;
  flex: none;
  width: 940px;
  height: 900px;
  overflow: hidden;
  background-color: #fff;
}

.vscroll {
  position: relative;
  flex: 1;
  background-color: #f0f0f0;
}

.thumb-v {
  position: absolute;
  left: 0;
  right: 0;
  top: 107px;
  height: 718px;
  background-color: #cdcdcd;
}

.arrow-up, .arrow-down {
  position: absolute;
  left: 4px;
}

.arrow-up { top: 6px; }
.arrow-down { top: 885px; }

/* diagram */
.wires {
  position: absolute;
  left: 0;
  top: 0;
}

.loop {
  position: absolute;
  left: 142px;
  top: 115px;
  width: 713px;
  height: 620px;
  border: 2px solid #555;
  box-shadow: 2px 2px 0 #fff, 4px 4px 0 #555;
}

.loop-n {
  position: absolute;
  left: 142px;
  top: 115px;
  width: 20px;
  height: 20px;
  background-color: #fdfbd4;
  border: 3px solid #1515f5;
}

.loop-n b {
  display: block;
  font-size: 12px;
  font-weight: 400;
  line-height: 14px;
}

.loop-n i {
  position: absolute;
  right: 0;
  bottom: 0;
  width: 6px;
  height: 6px;
  border-radius: 50%;
  background-color: #e01010;
}

.d-volt { left: 207px; top: 145px; }
.d-xy { left: 895px; top: 510px; }
.d-stop { left: 629px; top: 640px; }
.d-sample { left: 194px; top: 688px; }

.ramp-ring {
  position: absolute;
  left: -2px;
  top: 405px;
  display: flex;
  align-items: center;
  width: 110px;
  height: 24px;
  padding-left: 5px;
  background-color: #fff;
  border: 1px solid #3a3af0;
  box-shadow: 2px 2px 0 #3a3af0;
  color: #111;
  font-size: 14px;
  white-space: nowrap;
}

.ramp-ring i {
  margin-left: 6px;
  border-left: 4px solid transparent;
  border-right: 4px solid transparent;
  border-top: 6px solid #1515f5;
}

.seq {
  position: absolute;
  left: 230px;
  top: 324px;
  width: 408px;
  height: 243px;
  background-color: #dcdcdc;
}

.frame {
  position: absolute;
  top: 11px;
  height: 221px;
  background-color: #fff;
  border: 2px solid #555;
}

.frame-1 { left: 7px; width: 195px; }
.frame-2 { left: 208px; width: 193px; }

.note {
  position: absolute;
  height: 21px;
  background-color: #fdfbd4;
  border: 1px solid #333;
  box-shadow: 1px 1px 0 #999;
  font-size: 14px;
  line-height: 19px;
  text-align: center;
  white-space: nowrap;
}

.note-flat { left: 249px; top: 282px; width: 165px; }
.note-gen { left: 276px; top: 360px; width: 117px; }
.note-meas { left: 448px; top: 363px; width: 174px; }

.daq {
  position: absolute;
  display: flex;
  flex-direction: column;
  width: 121px;
  background-color: #c8e2fe;
  border: 2px solid #4a8cf0;
  color: #111;
}

.daq-1 { left: 281px; top: 395px; height: 114px; }
.daq-2 { left: 460px; top: 400px; height: 104px; }

.daq-top {
  display: flex;
  flex-direction: column;
  align-items: center;
  flex: 1;
  padding-top: 7px;
  font-size: 14px;
}

.daq-2 .daq-top { padding-top: 3px; }

.daq-top span { margin-top: 9px; }
.daq-2 .daq-top span { margin-top: 4px; }

.daq-ic { flex: none; width: 40px; height: 42px; }

.daq-row {
  flex: none;
  height: 21px;
  background-color: #fff;
  border-top: 2px solid #4a8cf0;
  border-bottom: 2px solid #4a8cf0;
  color: #32188c;
  font-size: 14px;
  line-height: 17px;
  text-align: center;
}

.daq-more {
  display: flex;
  justify-content: center;
  flex: none;
  height: 10px;
}

.daq-more svg { width: 12px; height: 10px; }

.t-small { font-size: 8.500px; font-weight: 700; }
.t-term { font-size: 10px; font-weight: 700; font-family: "DejaVu Sans", sans-serif; }
.t-orange { fill: #f58a1f; }
.t-navy { fill: #14148c; }
.t-blue { fill: #1515f5; }
.t-i { font-size: 14px; fill: #1515f5; }
.t-stop { font-size: 9px; font-weight: 700; fill: #e0202c; }
.t-tf { font-size: 8px; font-weight: 700; fill: #1f8a1f; }

/* taskbar */
.taskbar {
  position: absolute;
  left: 0;
  top: 1030px;
  display: flex;
  width: 1920px;
  height: 50px;
  background-color: #1c1c1c;
  color: #f2f2f2;
}

.start {
  display: flex;
  align-items: center;
  flex: none;
  width: 60px;
  padding-left: 20px;
}

.task-search {
  position: relative;
  display: flex;
  align-items: center;
  flex: none;
  width: 430px;
  padding-left: 15px;
  overflow: hidden;
  background-color: #f3f3f3;
  border-bottom: 1px solid #aaa;
  color: #222;
  font-size: 18px;
}

.search-ic { margin-right: 11px; }

.search-art {
  position: absolute;
  right: 0;
  top: 0;
}

.apps {
  display: grid;
  grid-template-columns: repeat(9, 62px);
  flex: none;
}

.app {
  position: relative;
  display: flex;
  align-items: center;
  justify-content: center;
}

.app-open::after {
  content: "";
  position: absolute;
  left: 7px;
  right: 7px;
  bottom: 0;
  height: 3px;
  background-color: #77b5e6;
}

.app-on { background-color: #3c3c3c; }
.app-on::after { left: 0; right: 0; }

.app-letter { font-size: 15px; font-weight: 700; fill: #fff; }
.app-small { font-size: 8px; fill: #7a5a00; }

.tray {
  display: flex;
  align-items: center;
  flex: 1;
  padding-left: 364px;
}

.weather { flex: none; }
.rain { margin-left: 11px; font-size: 17px; white-space: nowrap; }
.chev { margin-left: 31px; }
.phone { margin-left: 15px; }
.batt { margin-left: 11px; }
.speaker { margin-left: 9px; }
.eng { margin-left: 11px; font-size: 14px; }

.clock {
  display: flex;
  flex-direction: column;
  align-items: center;
  gap: 3px;
  margin-left: 16px;
  width: 78px;
  font-size: 14px;
  line-height: 18px;
  white-space: nowrap;
}

.notify {
  position: relative;
  display: flex;
  margin-left: 24px;
}

.notify b {
  position: absolute;
  left: 9px;
  top: 12px;
  width: 20px;
  height: 20px;
  border-radius: 50%;
  background-color: #1c1c1c;
  border: 1px solid #ccc;
  font-size: 14px;
  font-weight: 400;
  line-height: 18px;
  text-align: center;
}
```

FILE: graph.js
```js
// grid and trace of the XY graph, in page coordinates of the svg viewBox
var SVG = 'http://www.w3.org/2000/svg';
var grid = document.getElementById('grid');

function line(x1, y1, x2, y2, color) {
  var l = document.createElementNS(SVG, 'line');
  l.setAttribute('x1', x1);
  l.setAttribute('y1', y1);
  l.setAttribute('x2', x2);
  l.setAttribute('y2', y2);
  l.setAttribute('stroke', color);
  grid.appendChild(l);
}

var MINOR = '#525200';
var MAJOR = '#989800';

// minor lines first so the major ones sit on top
for (var i = -1; i < 103; i++) {
  var px = Math.round(171 + i * 7.685) + 0.5;
  line(px, 291, px, 797, MINOR);
}
for (var k = -14; k < 56; k++) {
  var py = Math.round(697 - k * 7.26) + 0.5;
  if (py > 291 && py < 797) line(164, py, 961, py, MINOR);
}

[171, 324, 478, 632, 786, 940].forEach(function (v) {
  line(v + 0.5, 291, v + 0.5, 797, MAJOR);
});
[300, 337, 371, 407, 444, 480, 516, 553, 589, 625, 661, 697, 733, 768].forEach(function (h) {
  line(164, h + 0.5, 961, h + 0.5, MAJOR);
});

// measured levels: x range, centre, spread
var steps = [
  { from: 171, to: 246, mid: 738, dev: 24, min: 675, max: 793 },
  { from: 247, to: 485, mid: 632, dev: 25, min: 573, max: 705 },
  { from: 486, to: 725, mid: 516, dev: 23, min: 460, max: 572 },
  { from: 726, to: 940, mid: 410, dev: 22, min: 362, max: 465 }
];

// spikes that stand out in the measurement
var spikes = { 172: 676, 263: 573, 336: 583, 515: 447, 600: 473, 840: 362, 784: 465, 877: 447 };

// small seeded generator so the picture is the same every run
var seed = 4711;
function rnd() {
  seed = (seed * 1664525 + 1013904223) % 4294967296;
  return seed / 4294967296;
}
function gauss() {
  return (rnd() + rnd() + rnd() + rnd() - 2) * 1.73;
}

var pts = [];
steps.forEach(function (s) {
  var prev = 0;
  for (var x = s.from; x <= s.to; x += 1.54) {
    prev = prev * 0.25 + gauss() * s.dev;
    var v = Math.min(s.max, Math.max(s.min, s.mid + prev));
    var spike = spikes[Math.round(x)];
    if (spike) v = spike;
    pts.push(x.toFixed(1) + ',' + v.toFixed(1));
  }
});
document.getElementById('trace').setAttribute('points', pts.join(' '));
```
